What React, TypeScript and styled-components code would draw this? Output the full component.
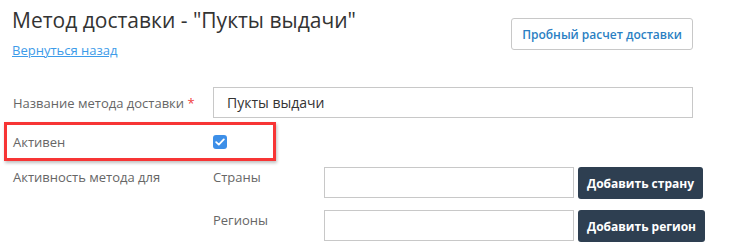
import styled, { createGlobalStyle } from 'styled-components';

const GlobalStyle = createGlobalStyle`
    body {
        margin: 0;
        background: #fff;
        font-family: 'Open Sans', 'Liberation Sans', sans-serif;
        color: #333;
    }
`;

const App = () => {
    return (
        <StyledPage>
            <GlobalStyle />
            <StyledHeader>
                <div>
                    <StyledTitle>Метод доставки - "Пукты выдачи"</StyledTitle>
                    <StyledBackLink href="#">Вернуться назад</StyledBackLink>
                </div>
                <StyledOutlineButton>Пробный расчет доставки</StyledOutlineButton>
            </StyledHeader>

            <StyledRow $height={31}>
                <StyledLabel>
                    Название метода доставки <StyledRequired>*</StyledRequired>
                </StyledLabel>
                <StyledInput defaultValue="Пукты выдачи" $width={480} />
            </StyledRow>

            <StyledRow $height={39} $marginTop={4}>
                <StyledHighlight />
                <StyledLabel>Активен</StyledLabel>
                <StyledCheckbox>
                    <svg width="10" height="8" viewBox="0 0 10 8">
                        <path
                            d="M1.2 4.2 L3.8 6.6 L8.8 1.4"
                            fill="none"
                            stroke="#fff"
                            strokeWidth="1.8"
                            strokeLinecap="round"
                            strokeLinejoin="round"
                        />
                    </svg>
                </StyledCheckbox>
            </StyledRow>

            <StyledActivity>
                <StyledLabel $alignTop>Активность метода для</StyledLabel>
                <StyledSubRows>
                    <StyledSubRow>
                        <StyledSubLabel>Страны</StyledSubLabel>
                        <StyledInput $width={250} />
                        <StyledDarkButton>Добавить страну</StyledDarkButton>
                    </StyledSubRow>
                    <StyledSubRow>
                        <StyledSubLabel>Регионы</StyledSubLabel>
                        <StyledInput $width={250} />
                        <StyledDarkButton>Добавить регион</StyledDarkButton>
                    </StyledSubRow>
                </StyledSubRows>
            </StyledActivity>
        </StyledPage>
    );
};

const StyledPage = styled.div`
    width: 740px;
    height: 248px;
    padding: 0 0 0 12px;
    box-sizing: border-box;
    overflow: hidden;
`;

const StyledHeader = styled.div`
    display: flex;
    justify-content: space-between;
    align-items: flex-start;
    width: 681px;
    height: 87px;
`;

const StyledTitle = styled.h1`
    margin: 5px 0 0;
    font-size: 21px;
    font-weight: 400;
    line-height: 30px;
    color: #333;
`;

const StyledBackLink = styled.a`
    display: inline-block;
    margin-top: 6px;
    font-size: 13px;
    line-height: 18px;
    color: #3d9be9;
    text-decoration: underline;
`;

const StyledOutlineButton = styled.button`
    margin-top: 18px;
    height: 32px;
    padding: 0 10px;
    background: #fff;
    border: 1px solid #c8c8c8;
    border-radius: 3px;
    font-family: inherit;
    font-size: 12px;
    font-weight: 600;
    color: #2b7fc3;
    cursor: pointer;
`;

const StyledRow = styled.div<{ $height: number; $marginTop?: number }>`
    position: relative;
    display: flex;
    align-items: center;
    height: ${(p) => p.$height}px;
    margin-top: ${(p) => p.$marginTop ?? 0}px;
`;

const StyledLabel = styled.div<{ $alignTop?: boolean }>`
    width: 201px;
    flex-shrink: 0;
    padding-left: 1px;
    box-sizing: border-box;
    font-size: 13px;
    line-height: 18px;
    color: #666;
    align-self: ${(p) => (p.$alignTop ? 'flex-start' : 'center')};
    margin-top: ${(p) => (p.$alignTop ? '1px' : '0')};
`;

const StyledRequired = styled.span`
    color: #f04040;
`;

const StyledInput = styled.input<{ $width: number }>`
    width: ${(p) => p.$width}px;
    height: 31px;
    box-sizing: border-box;
    padding: 0 13px;
    border: 1px solid #c8c8c8;
    border-radius: 0;
    font-family: inherit;
    font-size: 14px;
    color: #333;
    outline: none;
`;

const StyledHighlight = styled.div`
    position: absolute;
    left: -8px;
    top: 0;
    width: 272px;
    height: 39px;
    box-sizing: border-box;
    border: 3px solid #f73535;
    box-shadow: 1px 2px 3px rgba(0, 0, 0, 0.25);
    pointer-events: none;
`;

const StyledCheckbox = styled.span`
    display: inline-flex;
    align-items: center;
    justify-content: center;
    width: 14px;
    height: 14px;
    border-radius: 3px;
    background: #3d8fe8;
`;

const StyledActivity = styled.div`
    display: flex;
    margin-top: 6px;
`;

const StyledSubRows = styled.div`
    display: flex;
    flex-direction: column;
    gap: 11px;
`;

const StyledSubRow = styled.div`
    display: flex;
    align-items: flex-start;
    gap: 4px;
`;

const StyledSubLabel = styled.div`
    width: 107px;
    margin-top: 1px;
    font-size: 13px;
    line-height: 18px;
    color: #666;
`;

const StyledDarkButton = styled.button`
    height: 32px;
    padding: 0 9px;
    background: #2e3f51;
    border: none;
    border-radius: 3px;
    font-family: inherit;
    font-size: 12px;
    font-weight: 700;
    color: #fff;
    cursor: pointer;
`;

export default App;
